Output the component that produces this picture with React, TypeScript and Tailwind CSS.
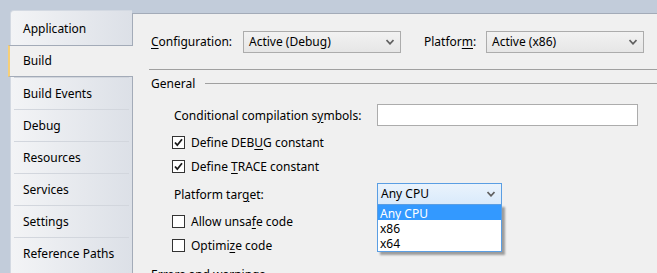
import React from "react";

/* ================= Helpers ================= */

const tabs = [
  "Application",
  "Build",
  "Build Events",
  "Debug",
  "Resources",
  "Services",
  "Settings",
  "Reference Paths",
];

function Chevron() {
  return (
    <svg width="8" height="6" viewBox="0 0 8 6" className="shrink-0">
      <path d="M0.5 1 L4 4.8 L7.5 1" fill="none" stroke="#606060" strokeWidth="1.7" />
    </svg>
  );
}

function Select({ value, className }: { value: string; className: string }) {
  return (
    <div
      className={`h-[22px] flex items-center justify-between pl-[5px] pr-[6px] border border-[#acacac] bg-gradient-to-b from-[#f2f2f2] to-[#e6e6e6] ${className}`}
    >
      <span>{value}</span>
      <Chevron />
    </div>
  );
}

function Check({ checked, children }: { checked?: boolean; children: React.ReactNode }) {
  return (
    <div className="h-[24px] flex items-center pl-[23px]">
      <div className="w-[13px] h-[13px] border border-[#333] bg-white flex items-center justify-center">
        {checked && (
          <svg width="11" height="11" viewBox="0 0 11 11">
            <path d="M2 5.5 L4.3 8.2 L9 2.3" fill="none" stroke="#1a1a1a" strokeWidth="1.8" />
          </svg>
        )}
      </div>
      <span className="ml-[6px] pt-[2px]">{children}</span>
    </div>
  );
}

/* ================= Main ================= */

export default function App() {
  return (
    <div
      className="w-[657px] h-[273px] overflow-hidden bg-[#c2ccda] flex items-start pt-[10px] pl-[10px] text-[12px] text-black leading-none"
      style={{ fontFamily: '"Noto Sans", "Open Sans", sans-serif' }}
    >
      {/* TAB STRIP */}
      <div className="w-[122px] h-[263px] shrink-0 rounded-tl-[4px] border-l border-t border-[#d3d9e2] bg-gradient-to-r from-[#f3f4f6] to-[#dce0e7] pt-[2px]">
        {tabs.map((t, i) =>
          t === "Build" ? (
            <div
              key={t}
              className="relative z-10 -ml-[3px] w-[125px] h-[32px] flex items-center pl-[13px] bg-[#f0f0f0] border-y border-[#a3abb8] border-l-2 border-l-[#f6cf79]"
            >
              {t}
            </div>
          ) : (
            <div
              key={t}
              className={`h-[32px] flex items-center pl-[9px] mx-[3px] ${
                i <= 1 ? "" : "border-t border-[#d2d6dd]"
              }`}
            >
              {t}
            </div>
          )
        )}
      </div>

      {/* CONTENT */}
      <div className="flex-1 h-[263px] mt-[3px] border-t border-l border-[#a3abb8] bg-[#f0f0f0] pl-[16px] pr-[14px]">
        {/* Configuration row */}
        <div className="mt-[17px] flex items-center pl-[2px]">
          <span className="w-[92px]">
            <u className="underline-offset-2">C</u>onfiguration:
          </span>
          <Select value="Active (Debug)" className="w-[158px]" />
          <span className="ml-[23px] w-[62px]">
            Platfor<u className="underline-offset-2">m</u>:
          </span>
          <Select value="Active (x86)" className="w-[158px]" />
        </div>

        <div className="mt-[16px] h-px bg-[#a0a0a0] -mr-[14px]" />

        {/* General */}
        <div className="mt-[3px] h-[20px] flex items-center pl-[2px] -mr-[14px]">
          <span className="pt-[2px]">General</span>
          <div className="ml-[10px] flex-1 h-px bg-[#a0a0a0]" />
        </div>

        {/* Conditional */}
        <div className="mt-[11px] flex items-center pl-[25px]">
          <span className="w-[203px] pt-[1px]">
            Conditional compilation s<u className="underline-offset-2">y</u>mbols:
          </span>
          <div className="w-[261px] h-[22px] bg-white border border-[#acacac]" />
        </div>

        <div className="mt-[4px]">
          <Check checked>
            Define DEB<u className="underline-offset-2">U</u>G constant
          </Check>
          <Check checked>
            Define <u className="underline-offset-2">T</u>RACE constant
          </Check>
        </div>

        {/* Platform target */}
        <div className="mt-[5px] flex items-center pl-[25px]">
          <span className="w-[203px] pt-[2px]">
            Platform tar<u className="underline-offset-2">g</u>et:
          </span>
          <div className="relative">
            <div className="w-[125px] h-[22px] flex items-center justify-between pl-[3px] pr-[6px] border border-[#5a9ee3] bg-gradient-to-b from-[#eaf3fc] to-[#d9eafb]">
              <span>Any CPU</span>
              <Chevron />
            </div>
            <div className="absolute z-20 left-0 top-[21px] w-[125px] bg-white border border-[#5a9ee3] shadow-[3px_3px_2px_rgba(0,0,0,0.35)] pb-[1px]">
              <div className="h-[15px] flex items-center pl-[2px] pt-[3px] bg-[#3399ff] text-white">Any CPU</div>
              <div className="h-[15px] flex items-center pl-[2px] pt-[3px]">x86</div>
              <div className="h-[15px] flex items-center pl-[2px] pt-[3px]">x64</div>
            </div>
          </div>
        </div>

        <div className="mt-[4px]">
          <Check>
            Allow unsa<u className="underline-offset-2">f</u>e code
          </Check>
          <Check>
            Optimi<u className="underline-offset-2">z</u>e code
          </Check>
        </div>

        <div className="mt-[8px] h-[20px] flex items-center pl-[2px]">
          <span>Errors and warnings</span>
        </div>
      </div>
    </div>
  );
}
